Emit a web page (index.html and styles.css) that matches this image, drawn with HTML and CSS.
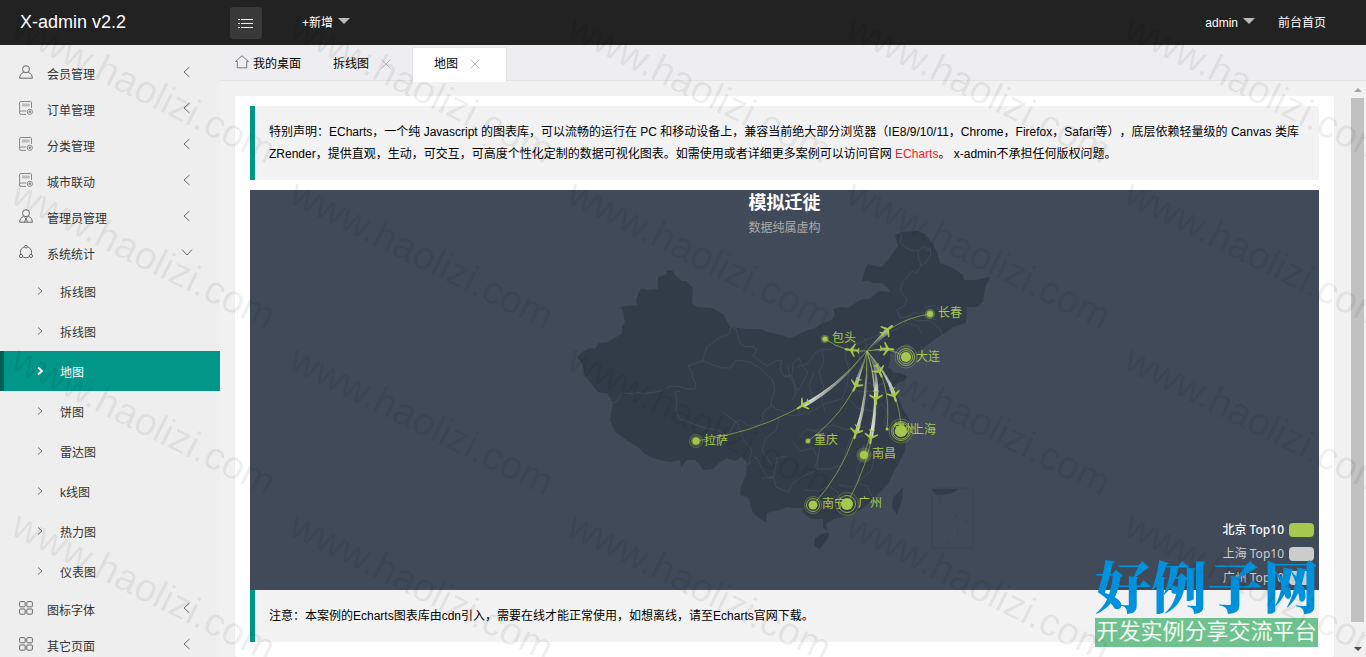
FILE: index.html
```html
<!DOCTYPE html>
<html lang="zh-CN">
<head>
<meta charset="utf-8">
<title>X-admin v2.2</title>
<link rel="stylesheet" href="styles.css">
</head>
<body>
<svg class="defs" width="0" height="0" aria-hidden="true">
  <defs>
    <symbol id="i-left" viewBox="0 0 14 14"><path d="M9.500 2 4 7l5.500 5"/></symbol>
    <symbol id="i-down" viewBox="0 0 14 14"><path d="M2 4.500 7 10l5-5.500"/></symbol>
    <symbol id="i-right" viewBox="0 0 14 14"><path d="M5 3.500 9 7l-4 3.500"/></symbol>
    <symbol id="i-close" viewBox="0 0 14 14"><path d="m2.500 2.500 9 9m0-9-9 9"/></symbol>
    <symbol id="i-user" viewBox="0 0 14 14"><circle cx="7" cy="4.200" r="3.500"/><path d="M4.800 7.200C2.500 8 .8 10 .6 13.200h12.800C13.200 10 11.500 8 9.200 7.200"/></symbol>
    <symbol id="i-admin" viewBox="0 0 14 14"><circle cx="7" cy="4.200" r="3.500"/><path d="M4.800 7.200C2.500 8 .8 10 .6 13.200h12.800C13.200 10 11.500 8 9.200 7.200M5.500 8.500l1.500 1 1.500-1M7 9.500l-1.500 3.700M7 9.500l1.500 3.700"/></symbol>
    <symbol id="i-form" viewBox="0 0 14 14"><path class="thin" d="M12.500 7V1.500q0-1-1-1H2q-1.400 0-1.400 1.400v10q0 1.500 1.400 1.500h5M.6 11q.3-1 1.500-1H7"/><path class="soft" d="M3 2.500h7.500v3H3z"/><circle class="thin" cx="10.800" cy="10.800" r="2.600"/><circle class="dot" cx="10.800" cy="10.800" r="1.200"/></symbol>
    <symbol id="i-ring" viewBox="0 0 14 14"><circle cx="7" cy="7.200" r="5.600"/><circle class="knob" cx="7" cy="1.600" r="1.400"/><circle class="knob" cx="2" cy="11" r="1.600"/><circle class="knob" cx="12" cy="11" r="1.600"/></symbol>
    <symbol id="i-grid" viewBox="0 0 14 14"><rect x=".6" y=".6" width="5.600" height="5.200" rx="1"/><rect x="7.800" y=".6" width="5.600" height="5.200" rx="1"/><rect x=".6" y="8" width="5.600" height="5.200" rx="1"/><rect x="7.800" y="8" width="5.600" height="5.200" rx="1"/></symbol>
    <symbol id="i-home" viewBox="0 0 14 14"><path d="M.5 6.500 7 .8l6.500 5.700H11.700v6.300H2.300V6.500z"/></symbol>
    <symbol id="i-menu" viewBox="0 0 16 14"><path d="M0 3.500h2M3 3.500h12M0 7.500h2M3 7.500h12M0 11.500h2M3 11.500h12"/></symbol>
    <path id="plane" transform="scale(.0172) translate(-1321.500 -1107)" d="M1705.060 1318.313v-89.254l-319.900-221.799.073-208.063c.521-84.662-26.629-121.796-63.961-121.491-37.332-.305-64.482 36.829-63.961 121.491l.073 208.063-319.900 221.799v89.254l330.343-157.288 12.238 241.308-134.449 92.931.531 42.034 175.125-42.917 175.125 42.917.531-42.034-134.449-92.931 12.238-241.308z"/>
    <radialGradient id="trail" gradientUnits="userSpaceOnUse" cx="867" cy="351" r="85">
      <stop offset="0" stop-color="#fff" stop-opacity="0"/><stop offset="1" stop-color="#fff" stop-opacity=".8"/>
    </radialGradient>
    <radialGradient id="trail-near" gradientUnits="userSpaceOnUse" cx="867" cy="351" r="40">
      <stop offset="0" stop-color="#fff" stop-opacity="0"/><stop offset="1" stop-color="#fff" stop-opacity=".7"/>
    </radialGradient>
    <text id="wm" transform="rotate(26.500)" class="wm-text">www.haolizi.com</text>
  </defs>
</svg>

<header class="topbar">
  <a class="logo" href="#">X-admin v2.2</a>
  <button class="menu-btn" type="button" aria-label="菜单"><svg class="ico-menu"><use href="#i-menu"/></svg></button>
  <a class="top-link" href="#">+新增<i class="caret"></i></a>
  <nav class="top-right">
    <a class="top-link" href="#">admin<i class="caret"></i></a>
    <a class="top-link" href="#">前台首页</a>
  </nav>
</header>

<div class="main">
  <nav class="side">
    <a class="item" href="#"><svg class="ico"><use href="#i-user"/></svg><span>会员管理</span><svg class="ico arrow"><use href="#i-left"/></svg></a>
    <a class="item" href="#"><svg class="ico"><use href="#i-form"/></svg><span>订单管理</span><svg class="ico arrow"><use href="#i-left"/></svg></a>
    <a class="item" href="#"><svg class="ico"><use href="#i-form"/></svg><span>分类管理</span><svg class="ico arrow"><use href="#i-left"/></svg></a>
    <a class="item" href="#"><svg class="ico"><use href="#i-form"/></svg><span>城市联动</span><svg class="ico arrow"><use href="#i-left"/></svg></a>
    <a class="item" href="#"><svg class="ico"><use href="#i-admin"/></svg><span>管理员管理</span><svg class="ico arrow"><use href="#i-left"/></svg></a>
    <a class="item" href="#"><svg class="ico"><use href="#i-ring"/></svg><span>系统统计</span><svg class="ico arrow"><use href="#i-down"/></svg></a>
    <a class="sub" href="#"><svg class="ico"><use href="#i-right"/></svg><span>拆线图</span></a>
    <a class="sub" href="#"><svg class="ico"><use href="#i-right"/></svg><span>拆线图</span></a>
    <a class="sub current" href="#"><svg class="ico"><use href="#i-right"/></svg><span>地图</span></a>
    <a class="sub" href="#"><svg class="ico"><use href="#i-right"/></svg><span>饼图</span></a>
    <a class="sub" href="#"><svg class="ico"><use href="#i-right"/></svg><span>雷达图</span></a>
    <a class="sub" href="#"><svg class="ico"><use href="#i-right"/></svg><span>k线图</span></a>
    <a class="sub" href="#"><svg class="ico"><use href="#i-right"/></svg><span>热力图</span></a>
    <a class="sub" href="#"><svg class="ico"><use href="#i-right"/></svg><span>仪表图</span></a>
    <a class="item" href="#"><svg class="ico"><use href="#i-grid"/></svg><span>图标字体</span><svg class="ico arrow"><use href="#i-left"/></svg></a>
    <a class="item" href="#"><svg class="ico"><use href="#i-grid"/></svg><span>其它页面</span><svg class="ico arrow"><use href="#i-left"/></svg></a>
  </nav>

  <section class="work">
    <div class="tabs">
      <a class="tab home" href="#"><svg class="ico"><use href="#i-home"/></svg>我的桌面</a>
      <div class="tab"><a href="#">拆线图</a><button class="close" type="button" aria-label="关闭"><svg class="ico-x"><use href="#i-close"/></svg></button></div>
      <div class="tab active"><a href="#">地图</a><button class="close" type="button" aria-label="关闭"><svg class="ico-x"><use href="#i-close"/></svg></button></div>
    </div>
    <div class="pane">
      <div class="page">
        <div class="card">
          <blockquote class="quote first">特别声明：ECharts，一个纯 Javascript 的图表库，可以流畅的运行在 PC 和移动设备上，兼容当前绝大部分浏览器（IE8/9/10/11，Chrome，Firefox，Safari等），底层依赖轻量级的 Canvas 类库 ZRender，提供直观，生动，可交互，可高度个性化定制的数据可视化图表。如需使用或者详细更多案例可以访问官网 <a class="red" href="#">ECharts</a>。 x-admin不承担任何版权问题。</blockquote>
          <div class="chart">
            <svg class="map" viewBox="250 190 1069 400" role="img" aria-label="模拟迁徙">
              <g class="land">
                <path d="M577 357l5-5 8-4 5 1 4-6 8-1 15-8v-8l3-3-2-13-3-3 15-2 2 1-1-6 5-12 7 2 10-1v-12l9-3-1-3 6-1 3 5 7 6h4l7 7-1 15 5 4 15 1 11 6 7 13 17 2 13 0 8 3 9 2 13 4 8-3 7-4 10-3 8-5 9-3 3-5-2-6 7-2 8 1 9-6 6-3h7l5-5 5-3 11 1-4-5-5-4h-9l-5-2h-6l3-11 3-6 7 2 7 1 6-7 10-14-3-11 7-3 15-1 8 3 7 9 5 9 3 11 13 5 10 7 1 5h13l13-3-5 11-2 14-6 5h-10l-1 16-13 4-6 5-9 5-8 6-7 5-8 5-3-1 1-5-5-3-6 1-7 5-5 4v6l-2 8 7 5 5 0 8 4-5 4-8 4-2 7 7 8 3 10 5 7 4 8-6 14-1 12-6 12-5 8-6 13-10 10-10 10-10 7-10 5-14 3-8 5 2 7-5-3v-9h-12l-8-6v-5h-10L787 507 779 510 767 513 766 522 762 520 753 513 748 497 740 495 741 487 746 475 747 463 742 457 735 461 727 458 720 462 713 469 703 470 700 465 695 460 687 460 681 467 680 460 670 462 660 460 650 457 644 453 638 447 628 441 615 432 610 420 613 403 607 393 598 392 590 382 585 376 582 363z"/>
                <path d="M903 487l-3 3-7 8-1 9 5 8 5-15 1-12zM822 534l7-1-1 5-8 11-6-3 1-8z"/>
                <path d="M932 489h27l-9 5-14 1z"/>
              </g>
              <g class="borders">
                <path d="M613 403l4-2 5-8 12 1 3-2 6 2 18-3 7-4 10-1 9 3h8l1-5-4-8 1-2-5-8 14-5 4 1 16 6h9l5-8 14 2 11 7 11 10 3 10-4 13 1 4-7 4-3 6 2 4-6 5-10 1-8-6-5 2-4 9-5 4-9-5-12-2-14-5-11-4-4-8 1-13-2-6 5-1M702 361l5-14 12-9 10-4 2-7 5 2 4 14 5 4 8-1 4 4-4 6 14 10 9-5 6-1-2 10 5 7 7-2 1-12 6-5 4 9 5 5-5 10-5 9-4-7-4-6-2-13M785 375l8 3 3 16-4 6M770 404l6 5 8 2 5 5 12-1 10-5M797 367l12-4 5-9 8-5 9 1 9-7 9-2 8 3 8-4 9-3 7-4 14-3 11-7 12 3 4 8M798 415l5-12 10-3-4-15 5-12M822 350l2 11-5 11 5 16-2 13 3 10M848 344l-3 13 4 12-2 17-5 13M864 338l3 9-8 6 2 12 8 6-3 11 9 4 10-3M848 386l12 6 15-1 14 3M842 399l-18 5-16 10M849 399l8 9 15 3 10-7 6 9-5 9 6 9M873 411l-3 14-11 3-13 2-12-5-13 4-11 2M748 465l4-15-8-9-6-17-14-11M779 419l-3 12-10 7-4 13 9 13M799 438l8-9 12 3M793 442l7 9 13-3 5 10-1 11 12 0 13-4M817 433l3 12-2 13-4 11M748 465l8-8 4 8 8 13 6-2 3-18 10-2M762 478l12 0 2 9 12 5 5-9 10-7 12-5M803 490l15 1 11-5 10 7-8 8-8 8M842 466l4-15 5-13 14-2M839 485l13 2 8-7-4-10 6-11 2-15M860 480l11-9 4-16 9-9 12 4M872 496l-5-10-10-3M881 463l7-5-5-9"/>
                <path d="M902 234l-2 9 10 7 8 1 1 10 3 4-6 8-4-2-9 11-3 8 7 9-2 6-8 5 3 8 10-2 7 5 12-1 10 8 6 11M918 251l6-5 4 5 2-3 1 7-7 9-4 1M937 320l-14-3M925 308l9-3 9 8M904 323l9-10 11 0 5 8"/>
                <path class="sea" d="M932 488h41v60h-41zM937 500l4-3-2 7M938 530l1-5M955 517l4-5M957 534l1-4M968 518l-2 6M944 545l6-4M967 488l4 6"/>
              </g>
              <g class="routes">
                <path d="M867 351Q890 320 930 314"/><path d="M867 351Q845 353 825 339"/><path d="M867 351Q888 346 906 357"/>
                <path d="M867 351Q804 426 696 441"/><path d="M867 351Q856 406 808 441"/><path d="M867 351Q868 445 813 505"/>
                <path d="M867 351Q890 425 847 504"/><path d="M867 351Q884 400 864 455"/><path d="M867 351Q892 380 887 428"/><path d="M867 351Q901 390 901 431"/>
              </g>
              <g class="trails">
                <path d="M867 351Q840 384 802 404L805 407Q842 386 867 351"/><path d="M867 351Q868 392 855 432L859 431Q870 392 867 351"/>
                <path d="M867 351Q880 390 869 437L873 437Q882 392 867 351"/>
              </g>
              <g class="trails near">
                <path d="M867 351L885 329L889 333Z"/><path d="M867 351L852 348V352Z"/><path d="M867 351L887 347V351Z"/>
                <path d="M867 351L854 384L858 385Z"/><path d="M867 351L877 373L881 370Z"/><path d="M867 351Q878 370 874 398H878Q880 370 867 351"/><path d="M867 351Q885 372 892 395L896 394Q887 371 867 351"/>
              </g>
              <g class="green">
                <g transform="translate(887 330) rotate(52)"><use href="#plane"/></g><g transform="translate(852 350) rotate(276)"><use href="#plane"/></g>
                <g transform="translate(887 349) rotate(95)"><use href="#plane"/></g><g transform="translate(803 405) rotate(237)"><use href="#plane"/></g>
                <g transform="translate(856 385) rotate(205)"><use href="#plane"/></g><g transform="translate(879 371) rotate(154)"><use href="#plane"/></g>
                <g transform="translate(876 398) rotate(180)"><use href="#plane"/></g><g transform="translate(894 395) rotate(163)"><use href="#plane"/></g>
                <g transform="translate(856 432) rotate(194)"><use href="#plane"/></g><g transform="translate(871 437) rotate(187)"><use href="#plane"/></g>
                <circle cx="930" cy="314" r="3"/><circle cx="825" cy="339" r="2.500"/><circle cx="906" cy="357" r="5"/><circle cx="696" cy="441" r="3.500"/><circle cx="808" cy="441" r="2"/>
                <circle cx="813" cy="505" r="4.500"/><circle cx="847" cy="504" r="6"/><circle cx="864" cy="455" r="4"/><circle cx="887" cy="429" r="1.500"/><circle cx="901" cy="431" r="6"/>
              </g>
              <g class="halo"><circle cx="930" cy="314" r="5"/><circle cx="825" cy="339" r="4"/><circle cx="696" cy="441" r="5"/><circle cx="808" cy="441" r="3"/><circle cx="864" cy="455" r="6"/></g>
              <g class="rings">
                <circle cx="906" cy="357" r="6.500"/><circle cx="906" cy="357" r="8.500"/><circle class="faint" cx="906" cy="357" r="11"/>
                <circle cx="813" cy="505" r="6.500"/><circle class="faint" cx="813" cy="505" r="8.500"/>
                <circle cx="847" cy="504" r="8.500"/><circle class="faint" cx="847" cy="504" r="11.500"/>
                <circle cx="901" cy="431" r="8"/><circle cx="901" cy="431" r="9.500"/><circle class="faint" cx="901" cy="431" r="12"/>
                <circle class="faint" cx="864" cy="455" r="7"/><circle class="faint" cx="696" cy="441" r="6.500"/>
              </g>
              <g class="city">
                <text x="938" y="317">长春</text><text x="832" y="342">包头</text><text x="916" y="361">大连</text><text x="704" y="445">拉萨</text><text x="814" y="444">重庆</text>
                <text x="822" y="508">南宁</text><text x="858" y="507">广州</text><text x="872" y="458">南昌</text><text x="893" y="433">常州</text><text x="912" y="434">上海</text>
              </g>
            </svg>
            <div class="chart-title"><strong>模拟迁徙</strong><span>数据纯属虚构</span></div>
            <div class="legend">
              <button type="button" class="on">北京 Top10<i></i></button>
              <button type="button">上海 Top10<i></i></button>
              <button type="button">广州 Top10<i></i></button>
            </div>
          </div>
          <blockquote class="quote">注意：本案例的Echarts图表库由cdn引入，需要在线才能正常使用，如想离线，请至Echarts官网下载。</blockquote>
        </div>
      </div>
      <div class="scroll"><i class="up"></i><i class="thumb"></i><i class="dn"></i></div>
    </div>
  </section>
</div>

<div class="brand"><strong>好例子网</strong><span>开发实例分享交流平台</span></div>

<svg class="watermark" aria-hidden="true">
  <defs>
    <g id="wm-line"><use href="#wm" x="0" y="0"/><use href="#wm" x="278"/><use href="#wm" x="556"/><use href="#wm" x="835"/><use href="#wm" x="1113"/></g>
  </defs>
  <use href="#wm-line" x="9" y="36"/><use href="#wm-line" x="9" y="202"/><use href="#wm-line" x="9" y="368"/><use href="#wm-line" x="9" y="534"/>
</svg>
</body>
</html>
```
FILE: styles.css
```css
* { box-sizing: border-box; }
body {
  margin: 0;
  height: 100vh;
  overflow: hidden;
  display: flex;
  flex-direction: column;
  font: 12px/22px "Liberation Sans", "Noto Sans CJK SC", sans-serif;
  color: #000;
  background: #f1f1f1;
  text-spacing-trim: space-all;
}
a { color: inherit; text-decoration: none; }
button { border: 0; padding: 0; background: none; font: inherit; color: inherit; }
.defs { position: absolute; }
svg { flex: none; }

.topbar { flex: none; height: 45px; display: flex; align-items: center; background: #222; color: #fff; }
.logo { width: 210px; margin-left: 20px; font-size: 18px; line-height: 24px; padding-bottom: 2px; }
.menu-btn { width: 32px; height: 32px; border-radius: 3px; background: #393939; display: flex; align-items: center; justify-content: center; }
.ico-menu { width: 16px; height: 14px; stroke: #eee; fill: none; }
.top-link { display: flex; align-items: center; }
.menu-btn + .top-link { margin-left: 40px; }
.caret { border: 6px solid transparent; border-top-color: #bbb; border-bottom: 0; margin: 0 0 4px 5px; }
.top-right { margin-left: auto; margin-right: 40px; display: flex; gap: 23px; }

.main { flex: 1; min-height: 0; display: flex; }
.side { width: 220px; flex: none; overflow: hidden; padding-top: 10px; background: #eee; color: #333; }
.item { display: flex; align-items: center; height: 36px; padding: 3px 26px 0 19px; }
.item span { flex: 1; padding-left: 14px; }
.ico { width: 14px; height: 14px; fill: none; stroke: #666; stroke-width: 1; }
.item .ico { margin-bottom: 5px; }
.thin { stroke: #888; }
.soft { fill: #bbb; stroke: none; }
.dot { fill: #888; stroke: none; }
.knob { fill: #eee; }
.sub { display: flex; align-items: center; gap: 13px; height: 40px; padding: 3px 0 0 33px; }
.sub .ico { margin-bottom: 3px; }
.sub.current { background: #009688; color: #fff; border-left: 4px solid #006055; padding-left: 29px; }
.current .ico { stroke: #fff; stroke-width: 2; }

.work { flex: 1; min-width: 0; display: flex; flex-direction: column; }
.tabs { flex: none; height: 36px; display: flex; background: #eeeef0; border-bottom: 1px solid #e4e4e4; }
.tab { display: flex; align-items: center; height: 36px; padding: 1px 18px 0 21px; }
.tab.home { padding: 1px 11px 0 15px; gap: 4px; }
.tab.home .ico { margin-bottom: 4px; stroke: #777; }
.tab.active { margin-top: 2px; height: 35px; padding: 0 23px 2px 21px; background: #fff; border: 1px solid #e4e4e4; border-bottom: 0; }
.close { width: 16px; height: 16px; margin-left: 9px; display: flex; align-items: center; justify-content: center; }
.ico-x { width: 14px; height: 14px; stroke: #bbb; fill: none; }

.pane { flex: 1; min-height: 0; display: flex; }
.page { flex: 1; min-width: 0; overflow: hidden; padding: 15px 15px 0; }
.card { min-height: 100%; padding: 10px 15px 15px; background: #fff; border-radius: 2px; box-shadow: 0 1px 2px rgba(0, 0, 0, .05); }
.quote { margin: 0; padding: 15px 14px; border-left: 5px solid #009688; border-radius: 0 2px 2px 0; background: #f2f2f2; }
.quote.first { margin-bottom: 10px; }
.red { color: #ff1a1a; }
.scroll { width: 17px; padding: 7px 2px 6px; display: flex; flex-direction: column; align-items: center; }
.scroll .up { border: 4px solid transparent; border-top: 0; border-bottom-color: #a3a3a3; }
.scroll .dn { border: 4px solid transparent; border-bottom: 0; border-top-color: #505050; }
.scroll .thumb { flex: 1; width: 13px; margin: 6px 0 25px; background: #c1c1c1; }

.chart { position: relative; background: #404a59; overflow: hidden; }
.map { display: block; width: 100%; height: 400px; }
.land { fill: #323c48; }
.borders { fill: none; stroke: #404a59; stroke-width: 1; stroke-linejoin: round; }
.sea { stroke: #3a4452; }
.routes { fill: none; stroke: #a6c84c; stroke-opacity: .6; }
.trails { fill: url(#trail); }
.trails.near { fill: url(#trail-near); }
.green { fill: #a6c84c; }
.halo { fill: #a6c84c; opacity: .4; }
.rings { fill: none; stroke: #a6c84c; stroke-opacity: .8; }
.rings .faint { stroke-opacity: .35; }
.city { fill: #a6c84c; font-size: 12px; }
.chart-title { position: absolute; top: 0; left: 0; right: 0; display: flex; flex-direction: column; align-items: center; color: #aaa; }
.chart-title strong { font-size: 18px; line-height: 27px; color: #fff; }
.legend { position: absolute; right: 5px; bottom: 1px; display: flex; flex-direction: column; gap: 2px; color: #ccc; font-family: "Noto Sans", "Noto Sans CJK SC", sans-serif; }
.legend button { display: flex; align-items: center; justify-content: flex-end; gap: 5px; }
.legend i { width: 25px; height: 14px; border-radius: 4px; background: #ccc; }
.legend .on { color: #fff; font-weight: 500; }
.legend .on i { background: #a6c84c; }

.brand { position: absolute; right: 48px; bottom: 10px; width: 223px; display: flex; flex-direction: column; }
.brand strong { font-family: "Noto Serif CJK SC", "Noto Sans CJK SC", serif; font-size: 56px; line-height: 58px; padding-bottom: 5px; font-weight: 900; color: #0091dc; white-space: nowrap; }
.brand span { height: 29px; line-height: 28px; text-align: center; font-size: 22px; color: #eefaf2; background: #6fc28f; white-space: nowrap; }

.watermark { position: absolute; inset: 0; width: 100%; height: 100%; pointer-events: none; }
.wm-text { font: 39px "Liberation Sans", Arial, sans-serif; fill: #000; fill-opacity: .07; }
```
